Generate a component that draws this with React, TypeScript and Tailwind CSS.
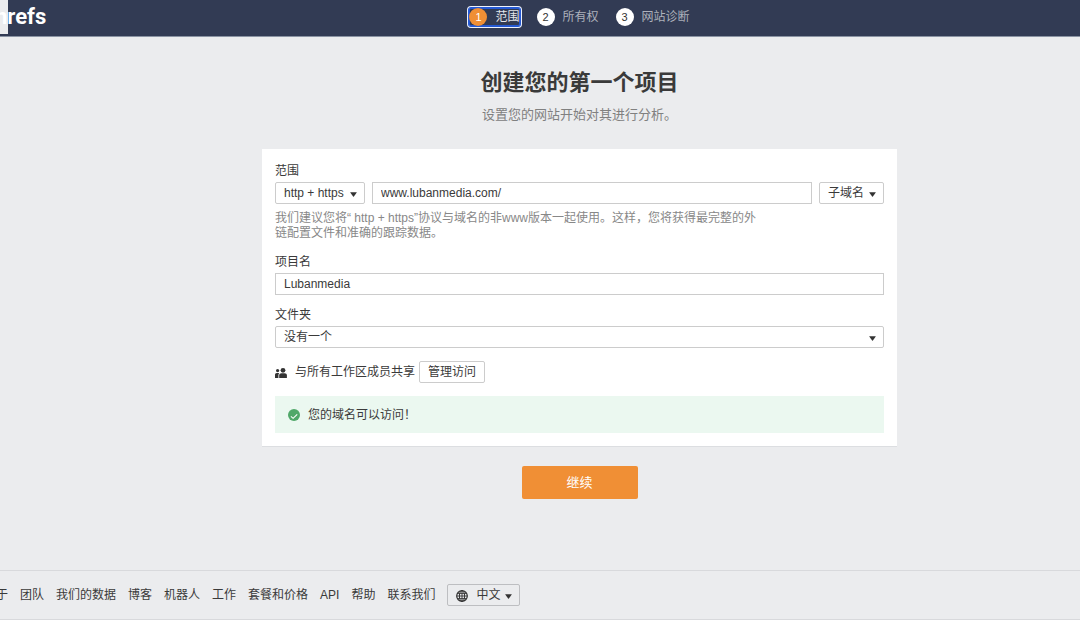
import React, { useState } from 'react';

const steps = [
  { id: 1, label: '范围' },
  { id: 2, label: '所有权' },
  { id: 3, label: '网站诊断' },
];

const footerLinks = ['关于', '团队', '我们的数据', '博客', '机器人', '工作', '套餐和价格', 'API', '帮助', '联系我们'];

function Caret({ className }: { className: string }) {
  return (
    <svg className={`pointer-events-none absolute ${className}`} width="7" height="5" viewBox="0 0 7 5" aria-hidden="true">
      <path d="M0.1 0.3h6.8L3.9 4.5a0.5 0.5 0 0 1-0.8 0z" fill="#333" />
    </svg>
  );
}

function MembersIcon() {
  return (
    <svg className="mt-0.5" width="12" height="12" viewBox="0 0 12 12" fill="#333" aria-hidden="true">
      <circle cx="2.6" cy="3.6" r="1.6" />
      <path d="M0 11V7.9C0 6.7 0.7 6 1.8 6h1.4c0.4 0 0.7 0.1 0.9 0.3C3.6 6.9 3.4 7.6 3.4 8.4V11z" />
      <circle cx="8" cy="3.3" r="2.4" />
      <path d="M4.2 11V8.4C4.2 7 5.1 6.2 6.4 6.2h3.2c1.4 0 2.3 0.8 2.3 2.2V11z" />
    </svg>
  );
}

function CheckIcon() {
  return (
    <svg width="12" height="12" viewBox="0 0 12 12" aria-hidden="true">
      <circle cx="6" cy="6" r="6" fill="#50a869" />
      <path d="M2.9 7.4l2.2 1.9L9.2 5.3" fill="none" stroke="#fff" strokeWidth="1.1" />
    </svg>
  );
}

function GlobeIcon() {
  return (
    <svg
      className="pointer-events-none absolute left-[9px] top-[6px]"
      width="12"
      height="12"
      viewBox="0 0 12 12"
      fill="none"
      stroke="#333"
      aria-hidden="true"
    >
      <circle cx="6" cy="6" r="5.3" strokeWidth="1.2" />
      <ellipse cx="6" cy="6" rx="2.6" ry="5.3" />
      <path d="M6 0.7v10.6M0.7 6h10.6M1.4 3.4h9.2M1.4 8.6h9.2" strokeWidth="0.9" />
    </svg>
  );
}

export default function App() {
  const [form, setForm] = useState({
    protocol: 'http + https',
    url: 'www.lubanmedia.com/',
    mode: '子域名',
    name: 'Lubanmedia',
    folder: '没有一个',
  });

  const handleChange = (e: React.ChangeEvent<HTMLInputElement | HTMLSelectElement>) => {
    const { name, value } = e.target;
    setForm(prev => ({ ...prev, [name]: value }));
  };

  return (
    <div className="flex min-h-screen flex-col overflow-hidden bg-[#ebecee] font-['Liberation_Sans','Noto_Sans_CJK_SC',sans-serif] text-xs leading-4 text-[#3a3a3a]">
      <header className="relative flex h-[37px] items-center border-b border-[#8a93a3] bg-[#323b54] pb-[3px] pl-[79px]">
        <div className="absolute left-0 top-0 h-[34px] w-2 bg-[#ebecee]" />
        <div className="relative flex-1">
          <a href="#" className="-ml-[84px] block font-[Roboto] text-[22px] font-bold leading-6 text-white">hrefs</a>
        </div>
        <nav className="flex gap-[17px]">
          {steps.map(step => (
            <button
              key={step.id}
              type="button"
              className={
                step.id === 1
                  ? 'flex h-[18px] items-center gap-2 rounded-xs text-[#e3e5ea] shadow-[0_0_0_1px_#2458d3,0_0_0_2px_#eef2fb,inset_0_0_0_1px_#2458d3]'
                  : 'flex h-[18px] items-center gap-2 text-[#adb1bb]'
              }
            >
              <span
                className={
                  step.id === 1
                    ? 'flex size-[18px] items-center justify-center rounded-full bg-[#f08f35] text-[11px] text-white'
                    : 'flex size-[18px] items-center justify-center rounded-full bg-white text-[11px] text-[#333]'
                }
              >
                {step.id}
              </span>
              {step.label}
            </button>
          ))}
        </nav>
        <div className="flex-1" />
      </header>

      <main className="flex flex-1 flex-col items-center pb-8 pl-[95px] pr-4 pt-8">
        <h1 className="text-[22px] font-bold leading-7">创建您的第一个项目</h1>
        <p className="mt-2 text-[13px] leading-5 text-[#808080]">设置您的网站开始对其进行分析。</p>

        <form className="flex w-full flex-col items-center" onSubmit={e => e.preventDefault()}>
          <div className="mt-6 w-full max-w-[635px] bg-white px-[13px] pb-[13px] pt-[14px] shadow-[0_1px_0_#dcdee1]">
            <label htmlFor="url" className="mb-[3px] block">范围</label>
            <div className="flex gap-[7px]">
              <div className="relative">
                <select
                  name="protocol"
                  aria-label="协议"
                  value={form.protocol}
                  onChange={handleChange}
                  className="h-[22px] w-[90px] appearance-none rounded-xs border border-[#ccc] bg-white px-2"
                >
                  <option>http + https</option>
                </select>
                <Caret className="right-2 top-[10px]" />
              </div>
              <input
                id="url"
                name="url"
                type="text"
                value={form.url}
                onChange={handleChange}
                className="h-[22px] min-w-0 flex-1 border border-[#ccc] bg-white px-2"
              />
              <div className="relative">
                <select
                  name="mode"
                  aria-label="模式"
                  value={form.mode}
                  onChange={handleChange}
                  className="h-[22px] w-[65px] appearance-none rounded-xs border border-[#ccc] bg-white px-2"
                >
                  <option>子域名</option>
                </select>
                <Caret className="right-2 top-[10px]" />
              </div>
            </div>
            <p className="mt-[7px] max-w-[492px] leading-[15px] text-[#888]">
              我们建议您将“ http + https”协议与域名的非www版本一起使用。这样，您将获得最完整的外
              <br />
              链配置文件和准确的跟踪数据。
            </p>

            <label htmlFor="name" className="mb-[3px] mt-[13px] block">项目名</label>
            <input
              id="name"
              name="name"
              type="text"
              value={form.name}
              onChange={handleChange}
              className="block h-[22px] w-full border border-[#ccc] bg-white px-2"
            />

            <label htmlFor="folder" className="mb-[3px] mt-3 block">文件夹</label>
            <div className="relative">
              <select
                id="folder"
                name="folder"
                value={form.folder}
                onChange={handleChange}
                className="block h-[22px] w-full appearance-none rounded-xs border border-[#ccc] bg-white px-2"
              >
                <option>没有一个</option>
              </select>
              <Caret className="right-2 top-[10px]" />
            </div>

            <div className="mt-[13px] flex items-center">
              <MembersIcon />
              <span className="ml-2">与所有工作区成员共享</span>
              <button type="button" className="ml-1 h-[22px] rounded-xs border border-[#ccc] bg-white px-2">
                管理访问
              </button>
            </div>

            <div className="mt-[13px] flex h-[37px] items-center gap-2 bg-[#ebf8f0] px-[13px]" role="status">
              <CheckIcon />
              <span>您的域名可以访问！</span>
            </div>
          </div>

          <button type="submit" className="mt-5 h-[33px] w-[116px] rounded-xs bg-[#f08f35] text-[13px] text-white">
            继续
          </button>
        </form>
      </main>

      <footer className="border-y border-[#d8d9dc] py-[13px]">
        <div className="-ml-4 flex items-center gap-3">
          {footerLinks.map(link => (
            <a key={link} href="#" className="shrink-0">{link}</a>
          ))}
          <div className="relative">
            <GlobeIcon />
            <select
              aria-label="语言"
              defaultValue="中文"
              className="block h-[22px] w-[73px] appearance-none rounded-xs border border-[#bdbec1] bg-transparent pl-7 pr-2"
            >
              <option>中文</option>
            </select>
            <Caret className="right-2 top-[10px]" />
          </div>
        </div>
      </footer>
    </div>
  );
}
